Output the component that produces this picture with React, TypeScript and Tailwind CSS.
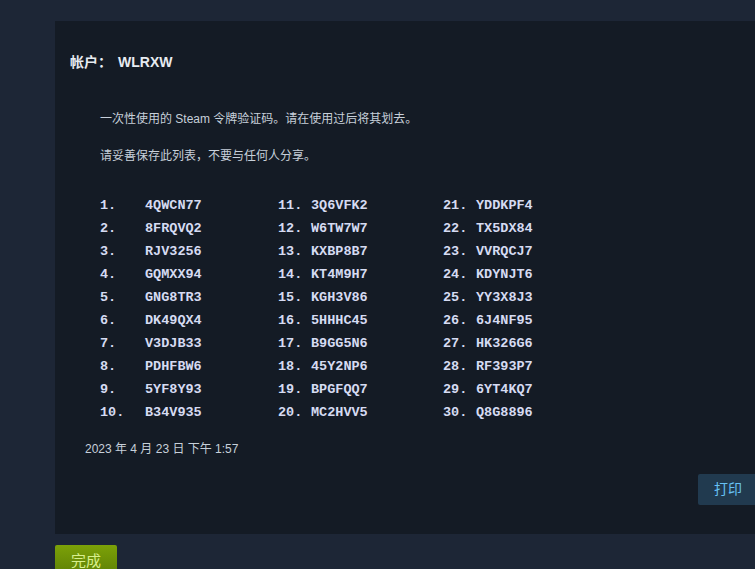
import React from "react";

const codes = [
  "4QWCN77","8FRQVQ2","RJV3256","GQMXX94","GNG8TR3","DK49QX4","V3DJB33","PDHFBW6","5YF8Y93","B34V935",
  "3Q6VFK2","W6TW7W7","KXBP8B7","KT4M9H7","KGH3V86","5HHHC45","B9GG5N6","45Y2NP6","BPGFQQ7","MC2HVV5",
  "YDDKPF4","TX5DX84","VVRQCJ7","KDYNJT6","YY3X8J3","6J4NF95","HK326G6","RF393P7","6YT4KQ7","Q8G8896",
];

function Col({ start, numW, w }: { start: number; numW: string; w: string }) {
  return (
    <div className={`flex flex-col ${w}`}>
      {codes.slice(start, start + 10).map((c, i) => (
        <div key={c} className="flex h-[23px] items-center">
          <span className={numW}>{start + i + 1}.</span>
          <span>{c}</span>
        </div>
      ))}
    </div>
  );
}

export default function App() {
  return (
    <div
      className="w-[755px] h-[569px] overflow-hidden bg-[#1d2636] pt-[21px]"
      style={{ fontFamily: '"Liberation Sans", "Noto Sans CJK SC", sans-serif' }}
    >
      <div className="ml-[55px] w-[703px] bg-[#141b25] pt-[31px] pb-[29px]">
        <div className="pl-[15px] h-[20px] leading-[20px] text-[14px] text-[#e8ecf2] font-bold">
          帐户：<span className="ml-[6px]">WLRXW</span>
        </div>
        <div className="pl-[45px] mt-[37px] text-[12px] leading-[20px] text-[#c7d0da]">
          一次性使用的 Steam 令牌验证码。请在使用过后将其划去。
        </div>
        <div className="pl-[45px] mt-[17px] text-[12px] leading-[20px] text-[#c7d0da]">
          请妥善保存此列表，不要与任何人分享。
        </div>
        <div
          className="pl-[45px] mt-[29px] flex text-[13.5px] font-bold text-[#d6dbf2]"
          style={{ fontFamily: '"Liberation Mono", "DejaVu Sans Mono", monospace' }}
        >
          <Col start={0} numW="w-[45px]" w="w-[178px]" />
          <Col start={10} numW="w-[33px]" w="w-[165px]" />
          <Col start={20} numW="w-[33px]" w="w-[165px]" />
        </div>
        <div className="pl-[30px] mt-[14px] text-[12px] leading-[20px] text-[#c7d0da]">
          2023 年 4 月 23 日 下午 1:57
        </div>
        <div className="mt-[15px] flex justify-end">
          <div className="h-[31px] px-[16px] flex items-center bg-[#213a4f] text-[#67c1f5] text-[14px] rounded-[2px]">
            打印
          </div>
        </div>
      </div>
      <div className="ml-[55px] mt-[11px] w-[62px] h-[32px] rounded-[2px] bg-gradient-to-b from-[#7ca108] to-[#5c7e05] text-[#d8ef8c] text-[15px] flex items-center justify-center">
        完成
      </div>
    </div>
  );
}
